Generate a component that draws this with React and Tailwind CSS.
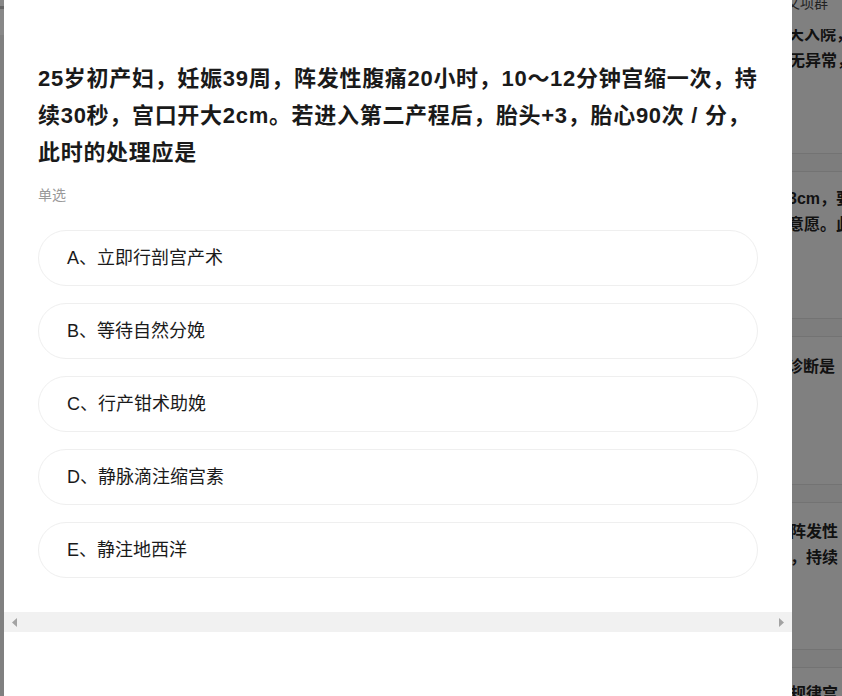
const font = { fontFamily: '"Liberation Sans", "Noto Sans CJK SC", sans-serif' };

const options = [
  "A、立即行剖宫产术",
  "B、等待自然分娩",
  "C、行产钳术助娩",
  "D、静脉滴注缩宫素",
  "E、静注地西洋",
];

function Sep() {
  return (
    <div className="h-[19px] shrink-0 border-y border-[#737373] bg-[#7d7d7d]" />
  );
}

function BgText({ lines, h, pt, shift }) {
  return (
    <div className="shrink-0 overflow-hidden" style={{ height: h }}>
      <div style={{ marginTop: pt }}>
        {lines.map((l, i) => (
          <div key={i} className="whitespace-nowrap text-[16px] font-bold leading-[26px] text-[#111]" style={{ marginLeft: shift[i] }}>
            {l}
          </div>
        ))}
      </div>
    </div>
  );
}

export default function App() {
  return (
    <div className="flex h-[696px] w-[842px] overflow-hidden bg-[#808080]" style={font}>
      {/* left edge of page behind the overlay */}
      <div className="flex w-[4px] shrink-0 flex-col">
        <div className="h-[6px] bg-[#888]" />
        <div className="h-[3px] bg-[#666]" />
        <div className="h-[26px] bg-[#888]" />
        <div className="flex-1 bg-[#808080]" />
      </div>

      {/* modal */}
      <div className="flex w-[788px] shrink-0 flex-col bg-white">
        <div className="px-[34px] pb-[34px] pt-[60px]">
          <h1 className="text-[22px] font-bold leading-[37px] tracking-[0.7px] text-[#1a1a1a]">
            25岁初产妇，妊娠39周，阵发性腹痛20小时，10～12分钟宫缩一次，持续30秒，宫口开大2cm。若进入第二产程后，胎头+3，胎心90次 / 分，此时的处理应是
          </h1>
          <div className="mt-[14px] text-[14px] leading-[20px] text-[#999]">单选</div>
          <div className="mt-[25px] flex flex-col gap-[17px]">
            {options.map((o) => (
              <div key={o} className="flex h-[56px] items-center rounded-full border border-[#efefef] pl-[28px] text-[18px] text-[#1a1a1a]">
                {o}
              </div>
            ))}
          </div>
        </div>
        {/* horizontal scrollbar */}
        <div className="flex h-[20px] items-center justify-between bg-[#f1f1f1] px-[8px]">
          <svg width="6" height="9" viewBox="0 0 6 9"><path d="M5 0v9L0 4.5z" fill="#a3a3a3" /></svg>
          <svg width="6" height="9" viewBox="0 0 6 9"><path d="M1 0v9l5-4.5z" fill="#a3a3a3" /></svg>
        </div>
        <div className="flex-1 bg-white" />
      </div>

      {/* right edge of page behind the overlay */}
      <div className="flex w-[50px] shrink-0 flex-col overflow-hidden bg-[#808080]">
        <div className="h-[29px] shrink-0 overflow-hidden">
          <div className="-mt-[7px] ml-[-6px] whitespace-nowrap text-[14px] leading-[20px] text-[#222]">文项群</div>
        </div>
        <BgText lines={["天入院，", "无异常，"]} h={124} pt={-7} shift={[-4, -3]} />
        <Sep />
        <BgText lines={["3cm，要", "意愿。此"]} h={146} pt={14} shift={[-4, -4]} />
        <Sep />
        <BgText lines={["诊断是"]} h={147} pt={17} shift={[-5]} />
        <Sep />
        <BgText lines={["阵发性", "，持续"]} h={146} pt={16} shift={[-2, -2]} />
        <Sep />
        <BgText lines={["规律宫"]} h={40} pt={13} shift={[-2]} />
      </div>
    </div>
  );
}
